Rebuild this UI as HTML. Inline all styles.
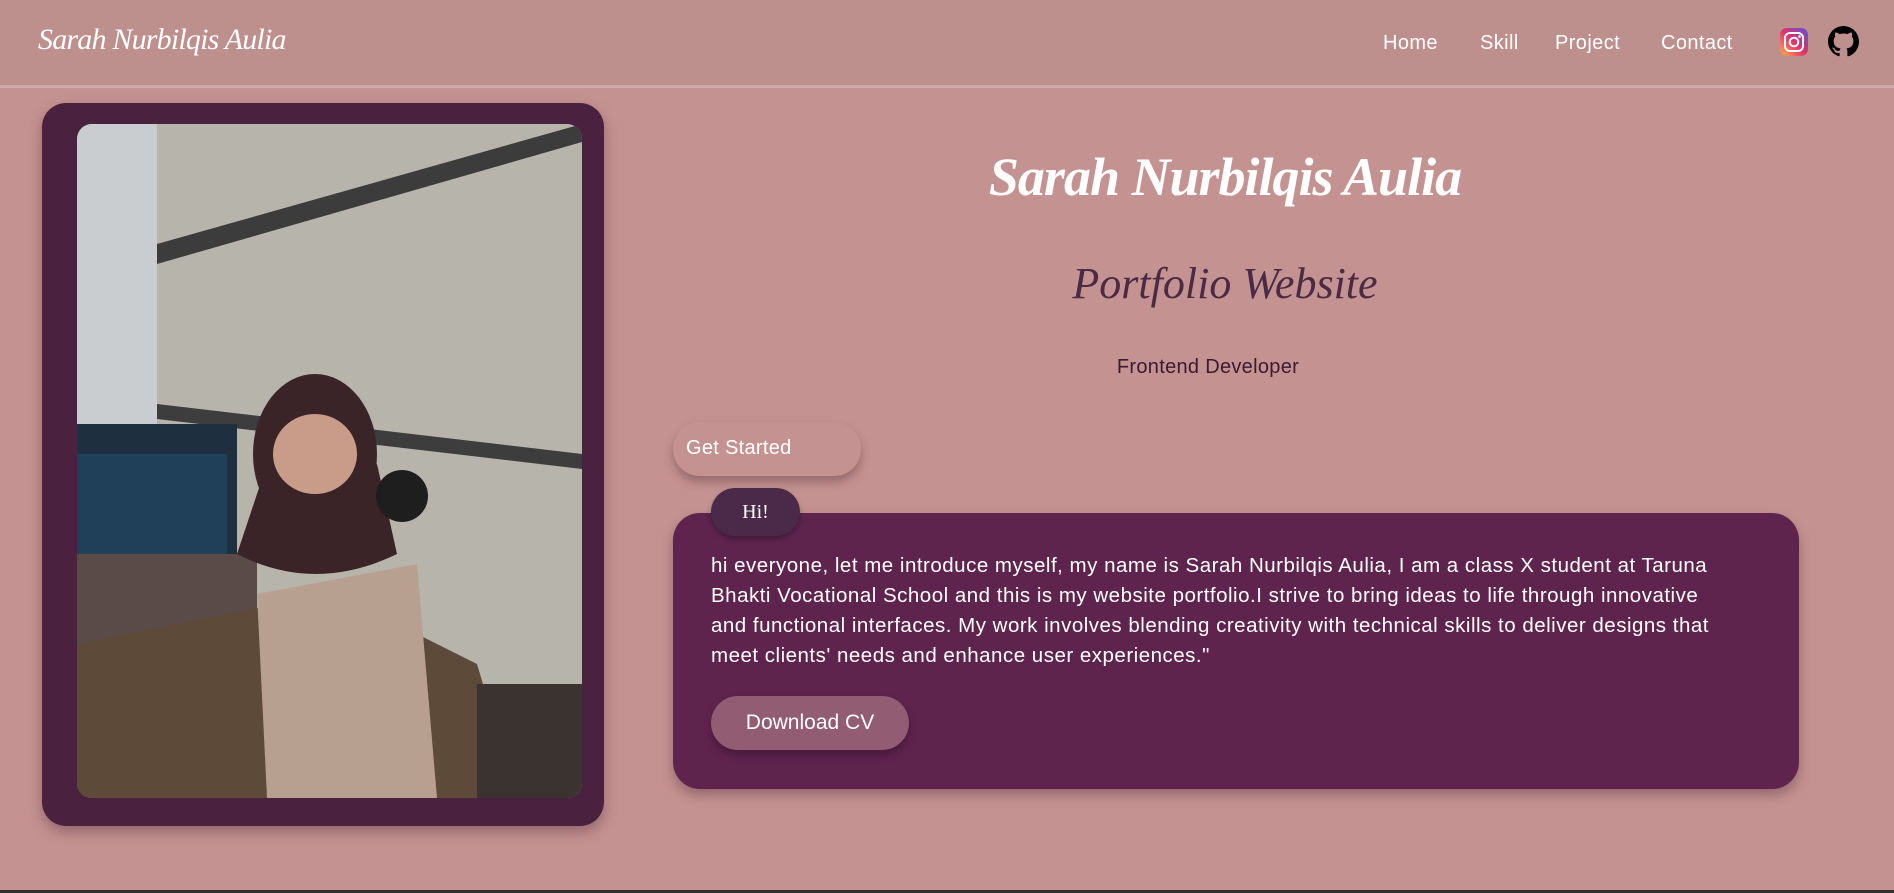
<!DOCTYPE html>
<html><head><meta charset="utf-8"><style>
*{margin:0;padding:0;box-sizing:border-box}
html,body{width:1894px;height:893px;overflow:hidden;background:#c49391;font-family:"Liberation Sans",sans-serif}
.nav{position:absolute;left:0;top:0;width:1894px;height:88px;background:#bd8f8d;border-bottom:3px solid #cfaaa8}
.logo{position:absolute;left:38px;top:23px;font-family:"Liberation Serif",serif;font-style:italic;font-size:30px;color:#fff;letter-spacing:-0.8px}
.links a{position:absolute;top:32px;color:#fff;font-size:20px;text-decoration:none;letter-spacing:.4px}
.card{position:absolute;left:42px;top:103px;width:562px;height:723px;background:#4a2240;border-radius:24px;box-shadow:0 6px 14px rgba(60,20,40,.35)}
.photo{position:absolute;left:35px;top:21px;width:505px;height:674px;border-radius:15px;overflow:hidden}
.t1{position:absolute;left:900px;width:650px;top:146px;text-align:center;font-family:"Liberation Serif",serif;font-style:italic;font-weight:bold;font-size:54px;color:#fff;letter-spacing:-1px}
.t2{position:absolute;left:900px;width:650px;top:258px;text-align:center;font-family:"Liberation Serif",serif;font-style:italic;font-size:44px;color:#4a2a45}
.t3{position:absolute;left:900px;width:616px;top:356px;text-align:center;font-size:20px;color:#3a1a30;letter-spacing:.3px}
.gs{position:absolute;left:673px;top:422px;width:188px;height:54px;border-radius:27px;background:#c49391;box-shadow:0 6px 10px rgba(70,30,40,.35);color:#fff;font-size:20px;padding:15px 0 0 13px;letter-spacing:.3px}
.box{position:absolute;left:673px;top:513px;width:1126px;height:276px;background:#5f244e;border-radius:27px;box-shadow:0 6px 12px rgba(60,20,40,.35)}
.hi{position:absolute;left:711px;top:488px;width:89px;height:48px;border-radius:24px;background:#4a2a48;color:#fff;font-family:"Liberation Serif",serif;font-size:20px;text-align:center;line-height:48px;box-shadow:0 3px 6px rgba(0,0,0,.3)}
.p{position:absolute;left:711px;top:551px;width:1080px;white-space:nowrap;color:#fff;font-size:20.5px;line-height:30px;letter-spacing:.5px}
.dl{position:absolute;left:711px;top:696px;width:198px;height:54px;border-radius:27px;background:#925c72;color:#fff;font-size:21px;text-align:center;line-height:54px;box-shadow:0 5px 8px rgba(40,10,30,.4)}
.bot{position:absolute;left:0;top:890px;width:1894px;height:3px;background:#333}
</style></head><body>
<div class="nav">
<div class="logo">Sarah Nurbilqis Aulia</div>
<div class="links"><a style="left:1383px">Home</a><a style="left:1480px">Skill</a><a style="left:1555px">Project</a><a style="left:1661px">Contact</a></div>
<svg style="position:absolute;left:1780px;top:28px" width="28" height="28" viewBox="0 0 28 28"><defs><linearGradient id="ig" x1="0" y1="1" x2="1" y2="0"><stop offset="0" stop-color="#fdb24a"/><stop offset=".5" stop-color="#e1306c"/><stop offset="1" stop-color="#5b51d8"/></linearGradient></defs><rect width="28" height="28" rx="7" fill="url(#ig)"/><rect x="5" y="5" width="18" height="18" rx="5" fill="none" stroke="#fff" stroke-width="2"/><circle cx="14" cy="14" r="4.3" fill="none" stroke="#fff" stroke-width="2"/><circle cx="19.5" cy="8.5" r="1.3" fill="#fff"/></svg>
<svg style="position:absolute;left:1828px;top:26px" width="31" height="31" viewBox="0 0 16 16"><path fill="#000" d="M8 0C3.580 0 0 3.580 0 8c0 3.540 2.290 6.530 5.470 7.590.4.07.55-.17.55-.38v-1.330c-2.230.48-2.700-1.070-2.700-1.070-.36-.92-.89-1.170-.89-1.170-.73-.5.06-.49.06-.49.8.06 1.230.83 1.230.83.72 1.220 1.870.87 2.330.66.07-.52.28-.87.51-1.070-1.780-.2-3.640-.89-3.640-3.950 0-.87.31-1.590.82-2.150-.08-.2-.36-1.020.08-2.120 0 0 .67-.21 2.200.82a7.600 7.600 0 0 1 4 0c1.530-1.040 2.200-.82 2.200-.82.44 1.100.16 1.920.08 2.120.51.56.82 1.270.82 2.150 0 3.070-1.870 3.750-3.650 3.950.29.25.54.73.54 1.480v2.200c0 .21.15.46.55.38A8.010 8.010 0 0 0 16 8c0-4.420-3.580-8-8-8z"/></svg>
</div>
<div class="card"><div class="photo">
<svg width="505" height="674" viewBox="0 0 505 674">
<rect width="505" height="674" fill="#b7b4ab"/>
<rect x="0" y="0" width="80" height="320" fill="#c9cdd0"/>
<polygon points="80,120 505,0 505,18 80,140" fill="#3c3c3c"/>
<polygon points="80,280 505,330 505,345 80,295" fill="#3d3d3d"/>
<rect x="0" y="300" width="160" height="170" fill="#1e3040"/>
<rect x="0" y="330" width="150" height="100" fill="#20405a"/>
<rect x="0" y="430" width="180" height="90" fill="#5a4a48"/>
<path d="M0 520 L200 480 L260 460 L320 500 L400 540 L440 674 L0 674 Z" fill="#5e4a38"/>
<path d="M180 470 L340 440 L360 674 L190 674 Z" fill="#b8a090"/>
<ellipse cx="238" cy="330" rx="62" ry="80" fill="#3a2428"/>
<ellipse cx="238" cy="330" rx="42" ry="40" fill="#c89c88"/>
<path d="M190 340 Q238 420 300 340 L320 430 Q238 470 160 430 Z" fill="#3a2428"/>
<circle cx="325" cy="372" r="26" fill="#1e1e1e"/>
<rect x="400" y="560" width="105" height="114" fill="#3a3330"/>
</svg>
</div></div>
<div class="t1">Sarah Nurbilqis Aulia</div>
<div class="t2">Portfolio Website</div>
<div class="t3">Frontend Developer</div>
<div class="gs">Get Started</div>
<div class="box"></div>
<div class="hi">Hi!</div>
<div class="p">hi everyone, let me introduce myself, my name is Sarah Nurbilqis Aulia, I am a class X student at Taruna<br>Bhakti Vocational School and this is my website portfolio.I strive to bring ideas to life through innovative<br>and functional interfaces. My work involves blending creativity with technical skills to deliver designs that<br>meet clients' needs and enhance user experiences."</div>
<div class="dl">Download CV</div>
<div class="bot"></div>
</body></html>
